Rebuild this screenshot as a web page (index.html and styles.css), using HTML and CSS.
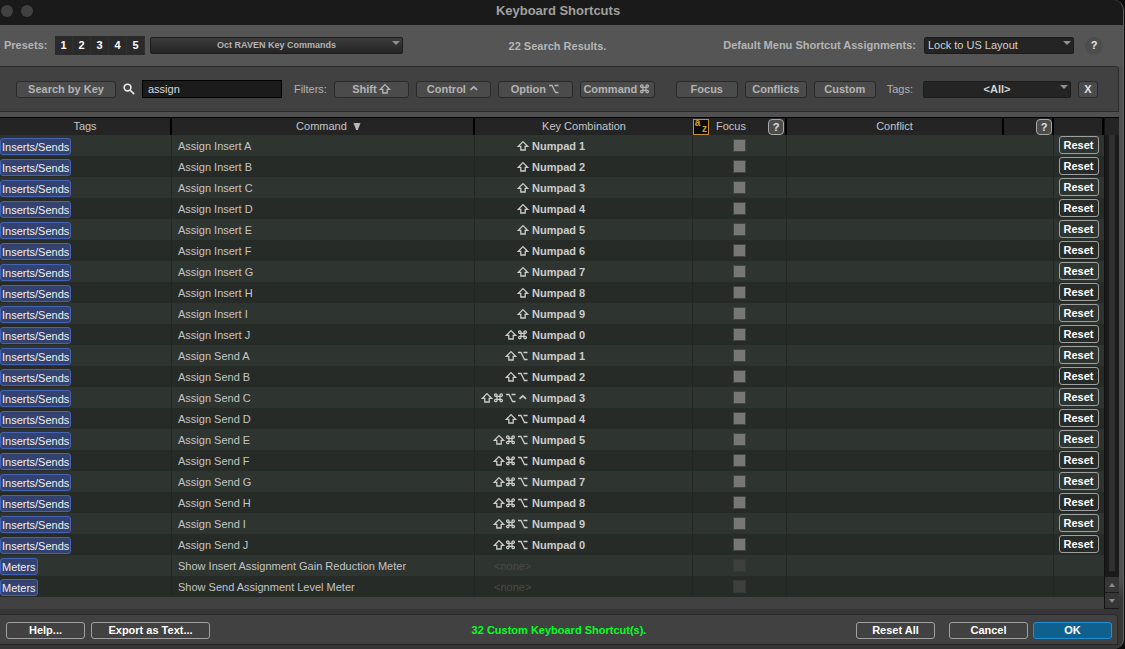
FILE: index.html
```html
<!DOCTYPE html>
<html lang="en">
<head>
<meta charset="utf-8">
<title>Keyboard Shortcuts</title>
<link rel="stylesheet" href="styles.css">
</head>
<body>
<svg class="defs" aria-hidden="true">
  <symbol id="shift" viewBox="0 0 12 12"><path d="M6 1.6 10.6 6.3H8.2V10H3.8V6.3H1.4Z"/></symbol>
  <symbol id="cmd" viewBox="0 0 12 12"><path d="M4 4.3H7V7.3H4ZM4 4.3H2.8A1.2 1.2 0 1 1 4 3.1ZM7 4.3V3.1A1.2 1.2 0 1 1 8.2 4.3ZM7 7.3H8.2A1.2 1.2 0 1 1 7 8.5ZM4 7.3V8.5A1.2 1.2 0 1 1 2.8 7.3Z"/></symbol>
  <symbol id="opt" viewBox="0 0 12 12"><path d="M1 2.5H4L7.5 9.5H10.5M6.5 2.5H10.5"/></symbol>
  <symbol id="ctrl" viewBox="0 0 12 12"><path class="heavy" d="M2.5 6.8 5.8 3.8 9.1 6.8"/></symbol>
</svg>
<div class="window">
  <header class="titlebar">
    <span class="lights"><i></i><i></i></span>
    <h1>Keyboard Shortcuts</h1>
  </header>

  <section class="toolbar">
    <div class="group">
      <span class="label presets-label">Presets:</span>
      <div class="presets"><button>1</button><button>2</button><button>3</button><button>4</button><button>5</button></div>
      <span class="drop drop-preset"><select aria-label="Preset"><option>Oct RAVEN Key Commands</option></select></span>
    </div>
    <span class="label results">22 Search Results.</span>
    <div class="group group-end">
      <label class="label" for="layout">Default Menu Shortcut Assignments:</label>
      <span class="drop drop-layout"><select id="layout"><option>Lock to US Layout</option></select></span>
      <button class="round-help">?</button>
    </div>
  </section>

  <section class="filters">
    <button class="btn wide">Search by Key</button>
    <label class="search-icon" for="search"><svg viewBox="0 0 14 14"><circle cx="5.3" cy="5.3" r="3.9"/><path d="M8.2 8.2 13 13"/></svg></label>
    <input id="search" class="search" type="text" value="assign" aria-label="Search">
    <span class="plain filters-label">Filters:</span>
    <button class="btn mod">Shift <svg class="key"><use href="#shift"/></svg></button>
    <button class="btn mod">Control <svg class="key"><use href="#ctrl"/></svg></button>
    <button class="btn mod">Option <svg class="key"><use href="#opt"/></svg></button>
    <button class="btn mod">Command <svg class="key"><use href="#cmd"/></svg></button>
    <button class="btn kind first-kind">Focus</button>
    <button class="btn kind">Conflicts</button>
    <button class="btn kind">Custom</button>
    <label class="plain tags-label" for="tags">Tags:</label>
    <span class="drop drop-tags"><select id="tags"><option>&lt;All&gt;</option></select></span>
    <button class="btn clear">X</button>
  </section>

  <main class="list">
    <table>
      <colgroup><col class="c-tags"><col class="c-command"><col class="c-keys"><col class="c-focus"><col><col class="c-help"><col class="c-reset"></colgroup>
      <thead>
        <tr>
          <th>Tags</th>
          <th class="command-head">Command <svg class="sort" viewBox="0 0 8 8"><path d="M0 0H8L5 8H3Z"/></svg></th>
          <th>Key Combination</th>
          <th><div class="focus-head"><span class="az"><b>a</b><b>z</b></span><span>Focus</span><button class="help">?</button></div></th>
          <th>Conflict</th>
          <th class="help-cell"><button class="help">?</button></th>
          <th></th>
        </tr>
      </thead>
      <tbody>
        <tr><td><span class="tag">Inserts/Sends</span></td><td>Assign Insert A</td><td><div class="combo"><span class="mods"><svg class="key"><use href="#shift"/></svg></span>Numpad 1</div></td><td class="mid"><input type="checkbox" aria-label="Focus"></td><td colspan="2"></td><td class="mid"><button class="reset">Reset</button></td></tr>
        <tr><td><span class="tag">Inserts/Sends</span></td><td>Assign Insert B</td><td><div class="combo"><span class="mods"><svg class="key"><use href="#shift"/></svg></span>Numpad 2</div></td><td class="mid"><input type="checkbox" aria-label="Focus"></td><td colspan="2"></td><td class="mid"><button class="reset">Reset</button></td></tr>
        <tr><td><span class="tag">Inserts/Sends</span></td><td>Assign Insert C</td><td><div class="combo"><span class="mods"><svg class="key"><use href="#shift"/></svg></span>Numpad 3</div></td><td class="mid"><input type="checkbox" aria-label="Focus"></td><td colspan="2"></td><td class="mid"><button class="reset">Reset</button></td></tr>
        <tr><td><span class="tag">Inserts/Sends</span></td><td>Assign Insert D</td><td><div class="combo"><span class="mods"><svg class="key"><use href="#shift"/></svg></span>Numpad 4</div></td><td class="mid"><input type="checkbox" aria-label="Focus"></td><td colspan="2"></td><td class="mid"><button class="reset">Reset</button></td></tr>
        <tr><td><span class="tag">Inserts/Sends</span></td><td>Assign Insert E</td><td><div class="combo"><span class="mods"><svg class="key"><use href="#shift"/></svg></span>Numpad 5</div></td><td class="mid"><input type="checkbox" aria-label="Focus"></td><td colspan="2"></td><td class="mid"><button class="reset">Reset</button></td></tr>
        <tr><td><span class="tag">Inserts/Sends</span></td><td>Assign Insert F</td><td><div class="combo"><span class="mods"><svg class="key"><use href="#shift"/></svg></span>Numpad 6</div></td><td class="mid"><input type="checkbox" aria-label="Focus"></td><td colspan="2"></td><td class="mid"><button class="reset">Reset</button></td></tr>
        <tr><td><span class="tag">Inserts/Sends</span></td><td>Assign Insert G</td><td><div class="combo"><span class="mods"><svg class="key"><use href="#shift"/></svg></span>Numpad 7</div></td><td class="mid"><input type="checkbox" aria-label="Focus"></td><td colspan="2"></td><td class="mid"><button class="reset">Reset</button></td></tr>
        <tr><td><span class="tag">Inserts/Sends</span></td><td>Assign Insert H</td><td><div class="combo"><span class="mods"><svg class="key"><use href="#shift"/></svg></span>Numpad 8</div></td><td class="mid"><input type="checkbox" aria-label="Focus"></td><td colspan="2"></td><td class="mid"><button class="reset">Reset</button></td></tr>
        <tr><td><span class="tag">Inserts/Sends</span></td><td>Assign Insert I</td><td><div class="combo"><span class="mods"><svg class="key"><use href="#shift"/></svg></span>Numpad 9</div></td><td class="mid"><input type="checkbox" aria-label="Focus"></td><td colspan="2"></td><td class="mid"><button class="reset">Reset</button></td></tr>
        <tr><td><span class="tag">Inserts/Sends</span></td><td>Assign Insert J</td><td><div class="combo"><span class="mods"><svg class="key"><use href="#shift"/></svg><svg class="key"><use href="#cmd"/></svg></span>Numpad 0</div></td><td class="mid"><input type="checkbox" aria-label="Focus"></td><td colspan="2"></td><td class="mid"><button class="reset">Reset</button></td></tr>
        <tr><td><span class="tag">Inserts/Sends</span></td><td>Assign Send A</td><td><div class="combo"><span class="mods"><svg class="key"><use href="#shift"/></svg><svg class="key"><use href="#opt"/></svg></span>Numpad 1</div></td><td class="mid"><input type="checkbox" aria-label="Focus"></td><td colspan="2"></td><td class="mid"><button class="reset">Reset</button></td></tr>
        <tr><td><span class="tag">Inserts/Sends</span></td><td>Assign Send B</td><td><div class="combo"><span class="mods"><svg class="key"><use href="#shift"/></svg><svg class="key"><use href="#opt"/></svg></span>Numpad 2</div></td><td class="mid"><input type="checkbox" aria-label="Focus"></td><td colspan="2"></td><td class="mid"><button class="reset">Reset</button></td></tr>
        <tr><td><span class="tag">Inserts/Sends</span></td><td>Assign Send C</td><td><div class="combo"><span class="mods"><svg class="key"><use href="#shift"/></svg><svg class="key"><use href="#cmd"/></svg><svg class="key"><use href="#opt"/></svg><svg class="key"><use href="#ctrl"/></svg></span>Numpad 3</div></td><td class="mid"><input type="checkbox" aria-label="Focus"></td><td colspan="2"></td><td class="mid"><button class="reset">Reset</button></td></tr>
        <tr><td><span class="tag">Inserts/Sends</span></td><td>Assign Send D</td><td><div class="combo"><span class="mods"><svg class="key"><use href="#shift"/></svg><svg class="key"><use href="#opt"/></svg></span>Numpad 4</div></td><td class="mid"><input type="checkbox" aria-label="Focus"></td><td colspan="2"></td><td class="mid"><button class="reset">Reset</button></td></tr>
        <tr><td><span class="tag">Inserts/Sends</span></td><td>Assign Send E</td><td><div class="combo"><span class="mods"><svg class="key"><use href="#shift"/></svg><svg class="key"><use href="#cmd"/></svg><svg class="key"><use href="#opt"/></svg></span>Numpad 5</div></td><td class="mid"><input type="checkbox" aria-label="Focus"></td><td colspan="2"></td><td class="mid"><button class="reset">Reset</button></td></tr>
        <tr><td><span class="tag">Inserts/Sends</span></td><td>Assign Send F</td><td><div class="combo"><span class="mods"><svg class="key"><use href="#shift"/></svg><svg class="key"><use href="#cmd"/></svg><svg class="key"><use href="#opt"/></svg></span>Numpad 6</div></td><td class="mid"><input type="checkbox" aria-label="Focus"></td><td colspan="2"></td><td class="mid"><button class="reset">Reset</button></td></tr>
        <tr><td><span class="tag">Inserts/Sends</span></td><td>Assign Send G</td><td><div class="combo"><span class="mods"><svg class="key"><use href="#shift"/></svg><svg class="key"><use href="#cmd"/></svg><svg class="key"><use href="#opt"/></svg></span>Numpad 7</div></td><td class="mid"><input type="checkbox" aria-label="Focus"></td><td colspan="2"></td><td class="mid"><button class="reset">Reset</button></td></tr>
        <tr><td><span class="tag">Inserts/Sends</span></td><td>Assign Send H</td><td><div class="combo"><span class="mods"><svg class="key"><use href="#shift"/></svg><svg class="key"><use href="#cmd"/></svg><svg class="key"><use href="#opt"/></svg></span>Numpad 8</div></td><td class="mid"><input type="checkbox" aria-label="Focus"></td><td colspan="2"></td><td class="mid"><button class="reset">Reset</button></td></tr>
        <tr><td><span class="tag">Inserts/Sends</span></td><td>Assign Send I</td><td><div class="combo"><span class="mods"><svg class="key"><use href="#shift"/></svg><svg class="key"><use href="#cmd"/></svg><svg class="key"><use href="#opt"/></svg></span>Numpad 9</div></td><td class="mid"><input type="checkbox" aria-label="Focus"></td><td colspan="2"></td><td class="mid"><button class="reset">Reset</button></td></tr>
        <tr><td><span class="tag">Inserts/Sends</span></td><td>Assign Send J</td><td><div class="combo"><span class="mods"><svg class="key"><use href="#shift"/></svg><svg class="key"><use href="#cmd"/></svg><svg class="key"><use href="#opt"/></svg></span>Numpad 0</div></td><td class="mid"><input type="checkbox" aria-label="Focus"></td><td colspan="2"></td><td class="mid"><button class="reset">Reset</button></td></tr>
        <tr><td><span class="tag">Meters</span></td><td>Show Insert Assignment Gain Reduction Meter</td><td class="none">&lt;none&gt;</td><td class="mid"><input type="checkbox" aria-label="Focus" disabled></td><td colspan="2"></td><td></td></tr>
        <tr><td><span class="tag">Meters</span></td><td>Show Send Assignment Level Meter</td><td class="none">&lt;none&gt;</td><td class="mid"><input type="checkbox" aria-label="Focus" disabled></td><td colspan="2"></td><td></td></tr>
      </tbody>
    </table>
    <div class="scroll">
      <div class="scroll-head"></div>
      <div class="track"></div>
      <button class="arrow up" aria-label="Scroll up"></button>
      <button class="arrow down" aria-label="Scroll down"></button>
    </div>
  </main>

  <footer class="actions">
    <div class="group left-actions"><button class="act">Help...</button><button class="act export">Export as Text...</button></div>
    <span class="count">32 Custom Keyboard Shortcut(s).</span>
    <div class="group right-actions"><button class="act">Reset All</button><button class="act cancel">Cancel</button><button class="act ok">OK</button></div>
  </footer>
</div>
</body>
</html>
```
FILE: styles.css
```css
* { box-sizing: border-box; }
body {
  margin: 0;
  background: #0c0c0c;
  color: #c4c4c4;
  font: 11px/13px "Liberation Sans", Arial, sans-serif;
}
button, input, select { font: inherit; color: inherit; margin: 0; padding: 0; }
svg { display: block; }
.defs { display: none; }

.window {
  display: flex;
  flex-direction: column;
  min-height: 100vh;
  margin-right: 1px;
  padding-bottom: 4px;
  border-radius: 0 10px 10px 0;
  border-right: 1px solid #606060;
  background: linear-gradient(#505050 580px, #363636 600px);
  overflow: hidden;
}

.titlebar {
  display: grid;
  grid-template-columns: 1fr auto 1fr;
  align-items: center;
  height: 25px;
  padding-bottom: 3px;
  padding-right: 7px;
  background: #1a1a1a;
}
.titlebar h1 { margin: 0; font-size: 13px; line-height: 16px; color: #a0a0a0; }
.lights { display: flex; gap: 8px; padding-left: 1px; }
.lights i { width: 12px; height: 12px; border-radius: 50%; background: #414141; }

.toolbar {
  display: grid;
  grid-template-columns: 1fr auto 1fr;
  align-items: center;
  height: 41px;
  padding: 0 20px 0 8px;
  padding-left: 4px;
  background: #555;
}
.group { display: flex; align-items: center; }
.group-end { justify-content: flex-end; gap: 8px; }
.label { font-weight: bold; color: #b4b4b4; white-space: nowrap; }
.presets-label { width: 51px; }
.results { padding: 1px 0 0 8px; }
.presets { display: flex; margin-right: 5px; background: #2a2a2a; }
.presets button {
  width: 18px;
  height: 19px;
  border: 0;
  border-right: 1px solid #303030;
  background: none;
  color: #fff;
  font-weight: bold;
}

.drop { position: relative; display: flex; }
.drop::after {
  content: "";
  position: absolute;
  top: 4px;
  right: 3px;
  border: 4px solid transparent;
  border-top: 4px solid #909090;
  border-bottom: 0;
  pointer-events: none;
}
.drop select {
  appearance: none;
  width: 100%;
  height: 17px;
  border: 1px solid #1c1c1c;
  border-radius: 2px;
  background: #242424;
  color: #d2d2d2;
}
.drop-preset { width: 253px; }
.drop-preset select {
  background: linear-gradient(#3c3c3c, #242424);
  color: #b4b4b4;
  font-size: 9px;
  font-weight: bold;
  text-align-last: center;
}
.drop-layout { width: 150px; }
.drop-layout select { padding-left: 3px; }
.drop-tags { flex: 0 1 148px; }
.drop-tags select { font-weight: bold; text-align-last: center; }
.round-help {
  width: 18px;
  height: 18px;
  margin-left: 3px;
  border: 0;
  border-radius: 50%;
  background: #4d4d4d;
  color: #e8e8e8;
  font-weight: bold;
}

.filters {
  display: flex;
  align-items: center;
  gap: 7px;
  height: 46px;
  margin-right: 4px;
  padding: 0 20px 0 16px;
  border: 1px solid #2a2a2a;
  border-left: 0;
  border-radius: 0 4px 0 0;
  background: #414141;
}
.btn {
  display: flex;
  align-items: center;
  justify-content: center;
  gap: 2px;
  height: 17px;
  border: 1px solid #2a2a2a;
  border-radius: 3px;
  background: #4b4b4b;
  color: #b4b4b4;
  font-weight: bold;
  white-space: nowrap;
}
.wide { width: 100px; }
.mod { width: 75px; }
.kind { width: 62px; }
.first-kind { margin-left: 14px; }
.clear { width: 20px; color: #e0e0e0; }
.search-icon svg { width: 12px; height: 12px; fill: none; stroke: #e8e8e8; stroke-width: 1.9; }
.search {
  flex: 0 1 140px;
  min-width: 0;
  height: 18px;
  padding: 0 5px;
  border: 1px solid #000;
  background: #1b1b1b;
  color: #dadada;
}
.plain { color: #b4b4b4; white-space: nowrap; }
.filters-label { margin-left: 5px; }
.tags-label { margin: 0 3px 0 4px; }
.key {
  flex: none;
  width: 12px;
  height: 12px;
  fill: none;
  stroke: currentColor;
  stroke-width: 1.3;
}
.heavy { stroke-width: 1.7; }

.list {
  display: flex;
  align-items: stretch;
  margin: 5px 4px 0 0;
  background: #414141;
}
table { flex: 1; width: 0; margin-bottom: 12px; border-collapse: separate; border-spacing: 0; table-layout: fixed; }
.c-tags { width: 172px; }
.c-command { width: 303px; }
.c-keys { width: 218px; }
.c-focus { width: 94px; }
.c-help { width: 50px; }
.c-reset { width: 50px; }
th {
  height: 18px;
  padding: 0;
  border-top: 1px solid #000;
  border-right: 2px solid #000;
  background: #242424;
  font-weight: normal;
  white-space: nowrap;
}
th:nth-child(3) { border-right: 0; }
.command-head { padding-left: 12px; }
.sort { display: inline-block; width: 8px; height: 7px; margin-left: 3px; fill: #b8b8b8; }
.focus-head { display: flex; align-items: center; padding-right: 1px; }
.az {
  display: grid;
  grid-template-columns: 1fr 1fr;
  width: 16px;
  height: 16px;
  margin-right: 7px;
  border: 1px solid #c8922a;
  background: #0c0c0c;
  color: #d09a2c;
  font-size: 10px;
  line-height: 6px;
}
.az b:last-child { padding-top: 6px; }
.help {
  width: 16px;
  height: 16px;
  border: 1px solid #a8a8a8;
  border-radius: 4px;
  background: #4c4c4c;
  color: #e0e0e0;
  font-weight: bold;
  line-height: 14px;
}
.focus-head .help { margin-left: auto; }
.help-cell .help { display: block; margin: 0 0 0 auto; }

td { height: 21px; padding: 1px 0 0; border-right: 1px solid #222523; white-space: nowrap; }
td:nth-child(2) { padding-left: 6px; }
td:last-child { border-right: 0; }
tbody tr:nth-child(odd) { background: #2e3430; }
tbody tr:nth-child(even) { background: #272b28; }
.tag {
  display: block;
  width: max-content;
  height: 17px;
  padding: 1px 1px 0;
  border: 1px solid #4563b4;
  border-radius: 3px;
  background: #33426e;
  color: #f0f0f0;
  line-height: 15px;
}
.combo { display: flex; align-items: center; gap: 3px; color: #ccc; font-weight: bold; }
.mods { display: flex; justify-content: flex-end; width: 54px; }
td.none { padding-left: 19px; color: #464b48; }
td.mid { padding: 0 1px 1px 0; }
.mid input {
  appearance: none;
  display: block;
  width: 13px;
  height: 13px;
  margin: 0 auto;
  border: 1px solid #444;
  background: #777;
}
.mid input:disabled { background: #3e4040; border-color: #363938; }
.reset {
  display: block;
  width: 40px;
  height: 18px;
  margin: 0 auto;
  border: 1px solid #a0a0a0;
  border-radius: 3px;
  background: none;
  color: #fff;
  font-weight: bold;
}

.scroll { display: flex; flex-direction: column; width: 15px; border-left: 1px solid #111; }
.scroll-head { height: 18px; border-top: 1px solid #000; background: #242424; }
.track { flex: 1; border: solid #1a1a1a; border-width: 0 4px 6px 4px; background: #303030; }
.arrow {
  display: flex;
  align-items: center;
  justify-content: center;
  height: 16px;
  border: 0;
  border-bottom: 1px solid #1a1a1a;
  background: #363636;
}
.arrow::before { content: ""; border: 3px solid transparent; }
.up::before { border-top: 0; border-bottom: 4px solid #8a8a8a; }
.down::before { border-bottom: 0; border-top: 4px solid #8a8a8a; }

.actions {
  display: grid;
  grid-template-columns: 1fr auto 1fr;
  align-items: center;
  flex: 1;
  margin: 5px 5px 0 0;
  padding: 1px 5px 0 6px;
  border: 1px solid #282828;
  border-left: 0;
  border-radius: 0 4px 0 0;
  background: #414141;
}
.left-actions { gap: 6px; }
.right-actions { justify-content: flex-end; }
.act {
  width: 79px;
  height: 17px;
  border: 1px solid #a0a0a0;
  border-radius: 3px;
  background: none;
  color: #fff;
  font-weight: bold;
}
.export { width: 119px; }
.cancel { margin: 0 5px 0 14px; }
.ok { border-color: #2090d0; background: #10608e; }
.count { color: #0f2; font-weight: bold; white-space: nowrap; }
```
